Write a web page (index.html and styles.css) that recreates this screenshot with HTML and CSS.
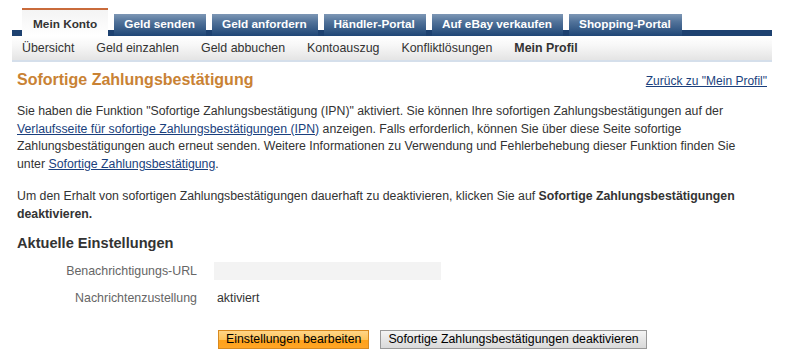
FILE: index.html
```html
<!DOCTYPE html>
<html lang="de">
<head>
    <meta charset="UTF-8">
    <title>Sofortige Zahlungsbestätigung</title>
    <link rel="stylesheet" href="styles.css">
</head>
<body>
    <div class="page">
        <!-- Main tabs -->
        <div class="tabs">
            <a class="tab active" href="#">Mein Konto</a>
            <a class="tab" href="#">Geld senden</a>
            <a class="tab" href="#">Geld anfordern</a>
            <a class="tab" href="#">Händler-Portal</a>
            <a class="tab" href="#">Auf eBay verkaufen</a>
            <a class="tab" href="#">Shopping-Portal</a>
        </div>
        <div class="subnav">
            <a href="#">Übersicht</a>
            <a href="#">Geld einzahlen</a>
            <a href="#">Geld abbuchen</a>
            <a href="#">Kontoauszug</a>
            <a href="#">Konfliktlösungen</a>
            <a href="#" class="current">Mein Profil</a>
        </div>

        <div class="content">
            <div class="head">
                <h1 class="title">Sofortige Zahlungsbestätigung</h1>
                <a class="back-link" href="#">Zurück zu "Mein Profil"</a>
            </div>
            <p>Sie haben die Funktion "Sofortige Zahlungsbestätigung (IPN)" aktiviert. Sie können Ihre sofortigen Zahlungsbestätigungen auf der <a href="#">Verlaufsseite für sofortige Zahlungsbestätigungen (IPN)</a> anzeigen. Falls erforderlich, können Sie über diese Seite sofortige Zahlungsbestätigungen auch erneut senden. Weitere Informationen zu Verwendung und Fehlerbehebung dieser Funktion finden Sie unter <a href="#">Sofortige Zahlungsbestätigung</a>.</p>
            <p>Um den Erhalt von sofortigen Zahlungsbestätigungen dauerhaft zu deaktivieren, klicken Sie auf <strong>Sofortige Zahlungsbestätigungen deaktivieren.</strong></p>

            <h2 class="section-title">Aktuelle Einstellungen</h2>
            <div class="settings">
                <div class="label">Benachrichtigungs-URL</div>
                <div class="value"><span class="url-box"></span></div>
                <div class="label">Nachrichtenzustellung</div>
                <div class="value text">aktiviert</div>
            </div>
            <div class="actions">
                <button class="btn btn-primary">Einstellungen bearbeiten</button>
                <button class="btn">Sofortige Zahlungsbestätigungen deaktivieren</button>
            </div>
        </div>
    </div>
</body>
</html>
```

FILE: styles.css
```css
body {
    margin: 0;
    background: #fff;
    font-family: "Liberation Sans", Arial, sans-serif;
    font-size: 12.3px;
    color: #333;
}
.page {
    width: 760px;
    margin-left: 12px;
    padding-top: 8px;
}
.tabs {
    display: flex;
    align-items: flex-end;
    gap: 6px;
    height: 28px;
    padding-left: 10px;
    background: linear-gradient(to bottom, transparent 22px, #1d4170 22px);
}
.tab {
    display: block;
    height: 22px;
    line-height: 21px;
    padding: 0 11px 0 10px;
    font-weight: bold;
    font-size: 11.8px;
    color: #fff;
    text-decoration: none;
    background: linear-gradient(to bottom, #7d97b5 0%, #52739a 35%, #1f4676 100%);
}
.tab.active {
    height: 26px;
    line-height: 28px;
    padding: 0 11px 0 11px;
    color: #333;
    border-top: 2px solid #c96b3b;
    background: linear-gradient(to bottom, #f4f4f4, #fff);
}
.subnav {
    display: flex;
    gap: 22px;
    height: 24px;
    align-items: center;
    padding-left: 10px;
    background: linear-gradient(to bottom, #fff 0%, #f7f7f7 40%, #e4e4e4 100%);
    border-bottom: 2px solid #d5dfeb;
}
.subnav a {
    color: #333;
    text-decoration: none;
    font-size: 12.4px;
}
.subnav a.current {
    font-weight: bold;
}
.content {
    padding: 0 5px;
}
.head {
    display: flex;
    justify-content: space-between;
    align-items: baseline;
    margin-top: 9px;
}
.title {
    margin: 0;
    font-size: 16px;
    font-weight: bold;
    color: #c98234;
}
.back-link {
    font-size: 12px;
}
a {
    color: #1a3f7d;
    text-decoration: underline;
}
p {
    margin: 14px 12px 12px 0;
    line-height: 17.7px;
}
.section-title {
    margin: 10px 0 0;
    font-size: 14.6px;
    font-weight: bold;
    color: #333;
}
.settings {
    display: grid;
    grid-template-columns: 180px 1fr;
    column-gap: 17px;
    row-gap: 9px;
    margin-top: 11px;
    align-items: center;
}
.label {
    text-align: right;
    color: #666;
    font-size: 12.4px;
    height: 18px;
    line-height: 18px;
}
.value.text {
    padding-left: 3px;
}
.url-box {
    display: block;
    width: 227px;
    height: 18px;
    background: #f3f3f3;
}
.actions {
    display: flex;
    gap: 11px;
    margin-top: 23px;
    padding-left: 201px;
}
.btn {
    font-family: "Liberation Sans", Arial, sans-serif;
    font-size: 12.3px;
    color: #000;
    height: 19px;
    padding: 0 7px;
    border: 1px solid #999;
    background: linear-gradient(to bottom, #f4f4f4 0%, #e6e6e6 50%, #d9d9d9 100%);
    line-height: 17px;
}
.btn-primary {
    border-color: #d98a1f;
    background: linear-gradient(to bottom, #ffd587 0%, #ffc55c 50%, #ffa21a 55%, #ffa526 100%);
}
```
